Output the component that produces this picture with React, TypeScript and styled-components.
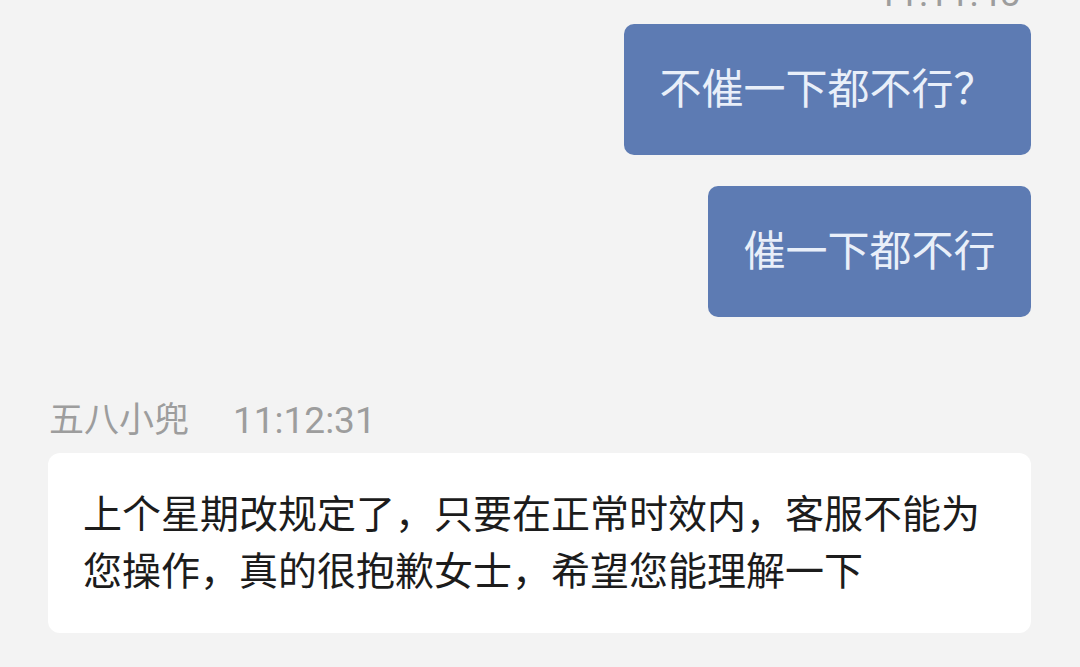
import React from 'react';
import styled, { createGlobalStyle } from 'styled-components';

const GlobalStyle = createGlobalStyle`
  html, body {
    margin: 0;
    padding: 0;
    background: #f3f3f3;
    overflow: hidden;
  }
  body {
    font-family: "Roboto", "Noto Sans CJK SC", sans-serif;
  }
`;

const Page = styled.div`
  width: 1080px;
  height: 667px;
  box-sizing: border-box;
  padding: 0 49px 0 48px;
  display: flex;
  flex-direction: column;
  overflow: hidden;
`;

const TimeRow = styled.div<{ align: 'left' | 'right' }>`
  display: flex;
  justify-content: ${p => (p.align === 'right' ? 'flex-end' : 'flex-start')};
  font-size: 37px;
  line-height: 40px;
  color: #9d9d9d;
  margin-top: -26px;
  padding-right: 11px;
  height: 40px;
`;

const Bubble = styled.div<{ gap: number }>`
  align-self: flex-end;
  margin-top: ${p => p.gap}px;
  background: #5d7bb3;
  color: #e9eff9;
  font-size: 42px;
  line-height: 59px;
  padding: 36px 35.5px;
  border-radius: 10px;
  white-space: nowrap;
`;

const SenderRow = styled.div`
  display: flex;
  align-items: center;
  gap: 44px;
  margin-top: 84px;
  height: 40px;
  font-size: 35px;
  line-height: 40px;
  color: #9d9d9d;
  padding-left: 1px;
`;

const SenderTime = styled.span`
  font-size: 37px;
`;

const Card = styled.div`
  margin-top: 12px;
  background: #ffffff;
  color: #1c1c1c;
  font-size: 39px;
  line-height: 57px;
  padding: 34px 35px 32px;
  border-radius: 12px;
`;

export default function App() {
  return (
    <>
      <GlobalStyle />
      <Page>
        <TimeRow align="right">11:11:45</TimeRow>
        <Bubble gap={10}>不催一下都不行？</Bubble>
        <Bubble gap={31}>催一下都不行</Bubble>
        <SenderRow>
          <span>五八小兜</span>
          <SenderTime>11:12:31</SenderTime>
        </SenderRow>
        <Card>上个星期改规定了，只要在正常时效内，客服不能为您操作，真的很抱歉女士，希望您能理解一下</Card>
      </Page>
    </>
  );
}
